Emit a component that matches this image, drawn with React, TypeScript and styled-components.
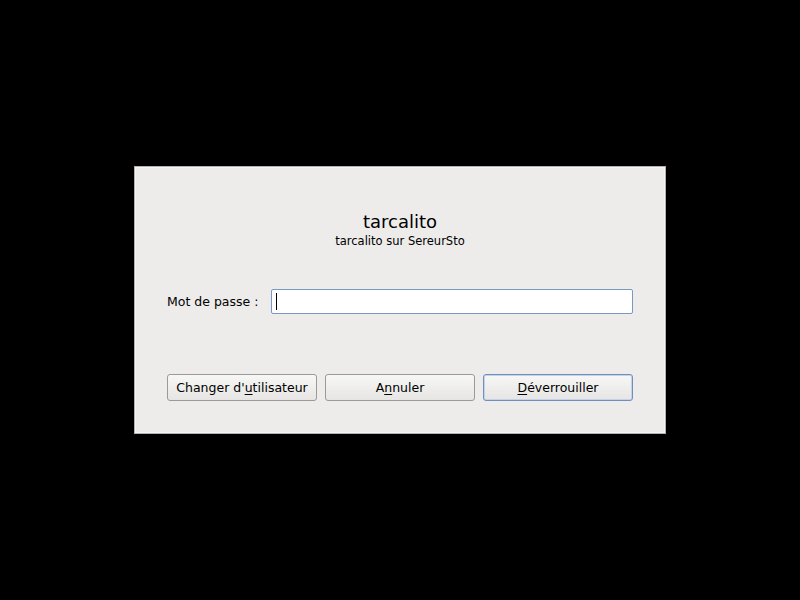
import React from 'react';
import styled, { createGlobalStyle } from 'styled-components';

const GlobalStyle = createGlobalStyle`
    html, body {
        margin: 0;
        padding: 0;
        background: #000;
    }
`;

const Screen = styled.div`
    width: 800px;
    height: 600px;
    display: flex;
    align-items: center;
    justify-content: center;
    font-family: 'DejaVu Sans', sans-serif;
    color: #000;
`;

const Dialog = styled.div`
    box-sizing: border-box;
    width: 532px;
    height: 268px;
    background: #edeceb;
    border: 1px solid #b3b1ae;
    box-shadow: inset 0 0 0 1px #f6f5f4;
    padding: 44px 32px 32px;
    display: flex;
    flex-direction: column;
`;

const Header = styled.div`
    display: flex;
    flex-direction: column;
    align-items: center;
`;

const Title = styled.div`
    font-size: 18px;
    line-height: 22px;
`;

const Subtitle = styled.div`
    font-size: 11.5px;
    line-height: 14px;
    margin-top: 1px;
`;

const FieldRow = styled.div`
    display: flex;
    align-items: center;
    gap: 13px;
    margin-top: 41px;
`;

const Label = styled.label`
    font-size: 12.5px;
    white-space: nowrap;
`;

const Input = styled.div`
    flex: 1;
    box-sizing: border-box;
    height: 25px;
    background: #fff;
    border: 1px solid #7a98c4;
    border-radius: 2px;
    display: flex;
    align-items: center;
    padding-left: 4px;
`;

const Caret = styled.span`
    width: 1px;
    height: 17px;
    background: #000;
`;

const Buttons = styled.div`
    margin-top: auto;
    display: grid;
    grid-template-columns: repeat(3, 1fr);
    gap: 8px;
`;

const Button = styled.button<{ $default?: boolean }>`
    box-sizing: border-box;
    height: 27px;
    padding: 0;
    font-family: 'DejaVu Sans', sans-serif;
    font-size: 12.5px;
    color: #000;
    background: linear-gradient(#f7f7f6, #e6e5e3);
    border: 1px solid ${(p) => (p.$default ? '#6f8fbe' : '#9c9a97')};
    border-radius: 3px;
    box-shadow: ${(p) => (p.$default ? 'inset 0 0 0 1px #c4d3ea' : 'none')};

    u {
        text-decoration: underline;
        text-underline-offset: 2px;
    }
`;

const App: React.FC = () => (
    <>
        <GlobalStyle />
        <Screen>
            <Dialog>
                <Header>
                    <Title>tarcalito</Title>
                    <Subtitle>tarcalito sur SereurSto</Subtitle>
                </Header>
                <FieldRow>
                    <Label>Mot de passe :</Label>
                    <Input>
                        <Caret />
                    </Input>
                </FieldRow>
                <Buttons>
                    <Button>
                        Changer d'<u>u</u>tilisateur
                    </Button>
                    <Button>
                        A<u>n</u>nuler
                    </Button>
                    <Button $default>
                        <u>D</u>éverrouiller
                    </Button>
                </Buttons>
            </Dialog>
        </Screen>
    </>
);

export default App;
